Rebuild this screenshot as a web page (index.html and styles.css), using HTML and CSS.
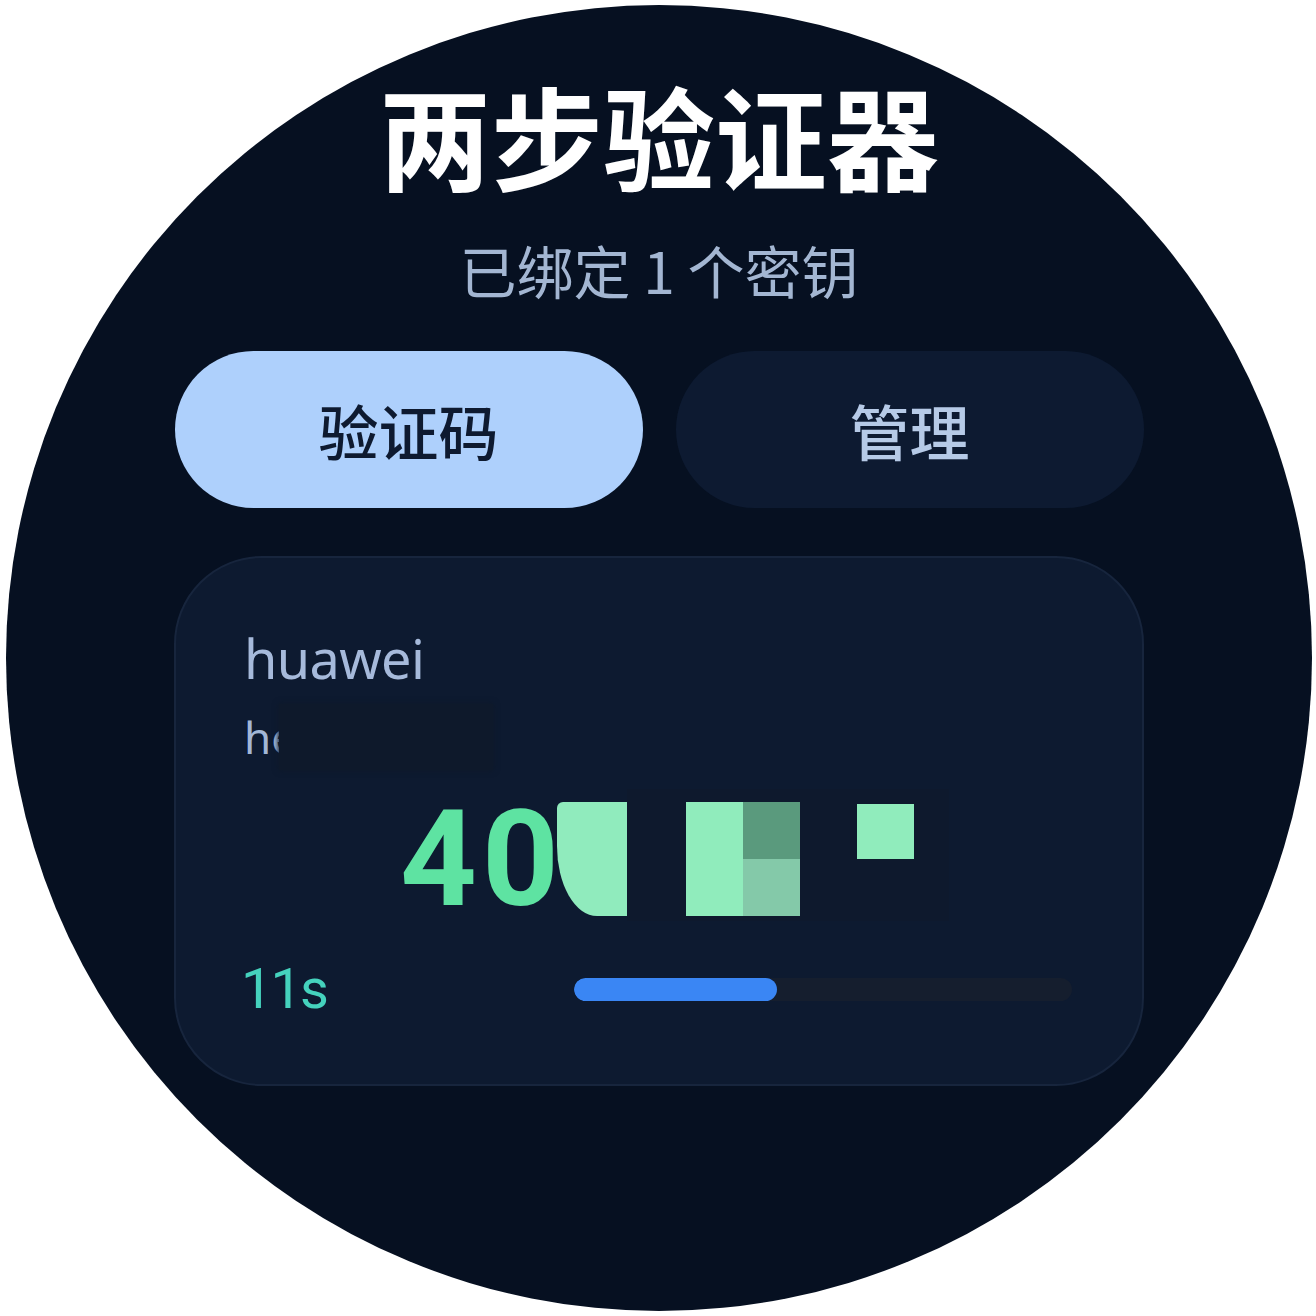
FILE: index.html
```html
<!DOCTYPE html>
<html lang="zh-CN">
<head>
<meta charset="utf-8">
<title>两步验证器</title>
<link rel="stylesheet" href="styles.css">
</head>
<body>
<div class="watch">
  <h1 class="title">两步验证器</h1>
  <p class="subtitle">已绑定 1 个密钥</p>
  <div class="tabs">
    <div class="tab tab-active">验证码</div>
    <div class="tab">管理</div>
  </div>
  <div class="card">
    <div class="issuer">huawei</div>
    <div class="account">he</div>
    <div class="redact"></div>
    <div class="code-line">
      <div class="code-group">
        <span class="code">400</span>
        <div class="mosaic">
          <div class="m-bg"></div>
          <div class="m-b1"></div>
          <div class="m-b2"><span class="q q1"></span><span class="q q2"></span><span class="q q3"></span></div>
          <div class="m-b3"></div>
        </div>
      </div>
    </div>
    <div class="timer-row">
      <span class="seconds">11s</span>
      <div class="track"><div class="fill" style="width:40.8%"></div></div>
    </div>
  </div>
</div>
</body>
</html>
```

FILE: styles.css
```css
html, body {
  margin: 0;
  padding: 0;
  background: #ffffff;
}

body {
  font-family: "Noto Sans", "Noto Sans CJK SC", sans-serif;
}

.watch {
  box-sizing: border-box;
  width: 1306px;
  height: 1306px;
  margin: 5px 4px 5px 6px;
  border-radius: 50%;
  background: #061021;
  display: flex;
  flex-direction: column;
  align-items: center;
  padding-top: 73px;
  overflow: hidden;
}

.title {
  margin: 0;
  font-family: "Noto Sans CJK SC", sans-serif;
  font-weight: 700;
  font-size: 112px;
  line-height: 112px;
  color: #ffffff;
}

.subtitle {
  margin: 51px 0 0;
  font-family: "Noto Sans CJK SC", sans-serif;
  font-weight: 400;
  font-size: 57px;
  line-height: 57px;
  color: #a3b6d2;
}

.tabs {
  margin-top: 53px;
  display: flex;
  gap: 33px;
}

.tab {
  width: 468px;
  height: 157px;
  border-radius: 79px;
  background: #0d1a31;
  color: #b6cae7;
  font-family: "Noto Sans CJK SC", sans-serif;
  font-weight: 500;
  font-size: 60px;
  display: flex;
  align-items: center;
  justify-content: center;
}

.tab-active {
  background: #aed0fc;
  color: #0e1a30;
}

.card {
  position: relative;
  box-sizing: border-box;
  margin-top: 48px;
  width: 970px;
  border: 2px solid #17253d;
  border-radius: 88px;
  background: #0d1a30;
  padding: 73px 70px 67px;
  display: flex;
  flex-direction: column;
}

.issuer {
  font-size: 54px;
  line-height: 54px;
  color: #a6badb;
  letter-spacing: -0.6px;
  margin-left: -2px;
}

.account {
  margin-top: 30px;
  margin-left: -2px;
  font-size: 44px;
  line-height: 44px;
  color: #a3b7d6;
}

.redact {
  position: absolute;
  left: 103px;
  top: 146px;
  width: 214px;
  height: 66px;
  background: #0e192b;
  box-shadow: 0 0 5px 1px #0e192b;
}

.code-line {
  margin-top: 34px;
  display: flex;
  justify-content: center;
}

.code-group {
  position: relative;
  width: 510px;
  height: 134px;
}

.code {
  font-family: Roboto, sans-serif;
  font-weight: 700;
  font-size: 134px;
  line-height: 134px;
  letter-spacing: 5px;
  color: #5ee3a2;
  font-variant-numeric: tabular-nums;
  display: block;
  margin-left: -4px;
}

.mosaic {
  position: absolute;
  left: 0;
  top: 0;
  width: 100%;
  height: 100%;
}

.m-bg {
  position: absolute;
  left: 223px;
  top: -4px;
  width: 322px;
  height: 132px;
  background: #0e192d;
}

.m-b1 {
  position: absolute;
  left: 153px;
  top: 9px;
  width: 70px;
  height: 114px;
  background: #90ebbd;
  border-top-left-radius: 6px;
  border-bottom-left-radius: 40px 70px;
}

.m-b2 {
  position: absolute;
  left: 282px;
  top: 9px;
  width: 114px;
  height: 114px;
  display: grid;
  grid-template-columns: 57px 57px;
  grid-template-rows: 57px 57px;
}

.q1 {
  grid-row: 1 / 3;
  grid-column: 1;
  background: #90ecbc;
}

.q2 {
  grid-row: 1;
  grid-column: 2;
  background: #5a9a7d;
}

.q3 {
  grid-row: 2;
  grid-column: 2;
  background: #84c9a9;
}

.m-b3 {
  position: absolute;
  left: 453px;
  top: 11px;
  width: 57px;
  height: 55px;
  background: #90ecbc;
}

.timer-row {
  margin-top: 34px;
  display: flex;
  align-items: center;
  justify-content: space-between;
}

.seconds {
  font-family: Roboto, sans-serif;
  font-weight: 400;
  font-size: 56px;
  line-height: 56px;
  color: #45d2bd;
  letter-spacing: -2px;
  margin-left: -5px;
}

.track {
  width: 498px;
  height: 23px;
  border-radius: 12px;
  background: #151e2e;
  overflow: hidden;
}

.fill {
  height: 100%;
  border-radius: 12px;
  background: #3a86f4;
}
```
